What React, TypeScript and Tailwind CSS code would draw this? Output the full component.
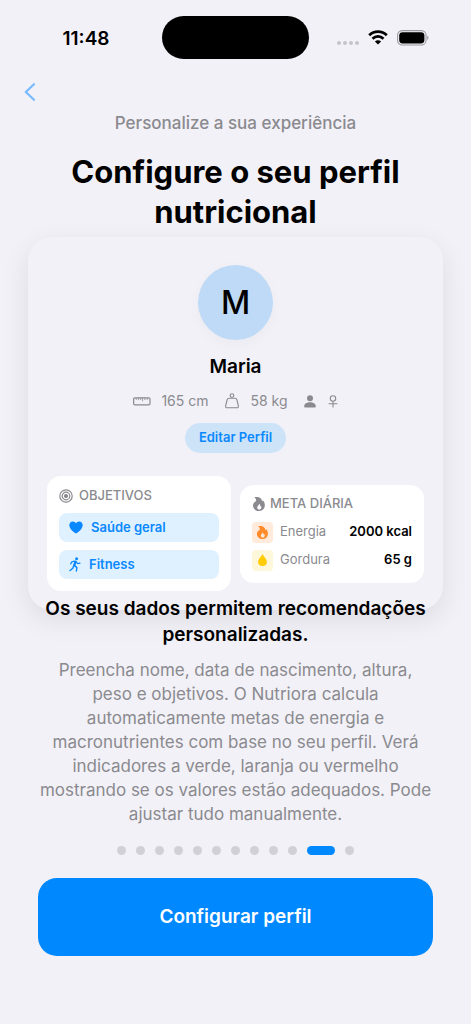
import React from "react";

const steps = 12;
const currentStep = 10;

const BatteryIcon = () => (
  <svg width="32" height="16" viewBox="0 0 32 16" fill="none">
    <rect x="0.6" y="0.6" width="28.4" height="14.4" rx="4.6" stroke="#9b9a9f" strokeWidth="1.1" />
    <rect x="2.2" y="2.2" width="25.2" height="11.2" rx="3.4" fill="#000" />
    <path d="M30.2 5.6c1.8.7 1.8 3.8 0 4.5z" fill="#9b9a9f" />
  </svg>
);

const WifiIcon = () => (
  <svg width="20" height="15" viewBox="0 0 20 15" fill="none" stroke="#000" strokeWidth="2.7">
    <path d="M1.2 5.2C6.2.3 13.8.3 18.8 5.2" />
    <path d="M4.5 8.7c3.2-3 7.8-3 11 0" />
    <path d="M10 14.6l-3.1-3.1c1.8-1.6 4.4-1.6 6.2 0z" fill="#000" stroke="none" />
  </svg>
);

const RulerIcon = () => (
  <svg width="18" height="9" viewBox="0 0 18 9" fill="none" stroke="#8a8a8f" strokeWidth="1.2">
    <rect x="0.6" y="0.8" width="16.4" height="7" rx="1.3" />
    <path d="M3.2 1v2M5.4 1v2M7.6 1v2M9.6 1v3.2M11.8 1v2M14.2 1v2" strokeWidth="0.8" />
  </svg>
);

const WeightIcon = () => (
  <svg width="14" height="16" viewBox="0 0 14 16" fill="none" stroke="#8a8a8f" strokeWidth="1.1">
    <circle cx="7" cy="2.5" r="1.8" />
    <path d="M4 5.2h6c1 0 1.5.4 1.8 1.3l1.5 6c.4 1.4-.2 2.3-1.4 2.3H2.1c-1.2 0-1.8-.9-1.4-2.3l1.5-6C2.5 5.6 3 5.2 4 5.2z" />
  </svg>
);

const PersonIcon = () => (
  <svg width="12" height="13" viewBox="0 0 12 13" fill="#8a8a8f">
    <circle cx="6" cy="3.2" r="3" />
    <path d="M.2 11.2C.2 8.8 2.7 7.2 6 7.2s5.8 1.6 5.8 4c0 1-.5 1.4-1.3 1.4h-9C.7 12.6.2 12.2.2 11.2z" />
  </svg>
);

const FemaleIcon = () => (
  <svg width="10" height="13" viewBox="0 0 10 13" fill="none" stroke="#8a8a8f" strokeWidth="1.1">
    <circle cx="5" cy="3.5" r="2.7" />
    <path d="M5 6.2V12.6M.6 8.8h8.8" />
  </svg>
);

const TargetIcon = () => (
  <svg width="14" height="14" viewBox="0 0 14 14" fill="none" stroke="#8a8a8f" strokeWidth="1.2">
    <circle cx="7" cy="7" r="6.2" />
    <circle cx="7" cy="7" r="3.8" />
    <circle cx="7" cy="7" r="1.5" fill="#8a8a8f" />
  </svg>
);

const FlameIcon = ({ size }: { size: number }) => (
  <svg width={size} height={size} viewBox="0 0 14 14" fill="currentColor" fillRule="evenodd">
    <path d="M2.3.3C6.4-.8 10 1.2 10.2 4.6c.4-.3.6-.8.6-1.3 1.4 1.3 2.1 3.2 2 5.2C12.6 11.8 10.2 14 7 14c-3.4 0-6-2.3-6-5.4 0-2.2 1.3-3.5 3.2-4.5C4.2 2.5 3.6 1.1 2.3.3zM7.2 6.6c.1 1.4-2 2.1-2 3.9 0 1.2.9 2 2 2 1.3 0 2.2-.9 2.2-2.1 0-.7-.2-1.2-.6-1.7-.1.3-.3.5-.6.6.1-1.1-.2-2.1-1-2.7z" />
  </svg>
);

const DropIcon = () => (
  <svg width="9" height="12" viewBox="0 0 9 12" fill="#ffcc00">
    <path d="M4.5 0C5 1.6 8.9 5 8.9 7.9 8.9 10.3 7 12 4.5 12S.1 10.3.1 7.9C.1 5 4 1.6 4.5 0z" />
  </svg>
);

const HeartIcon = () => (
  <svg width="14" height="13" viewBox="0 0 14 13" fill="currentColor">
    <path d="M7 12.6C6.5 12.5.3 8.6.3 4.3.3 2 1.8.5 3.8.5 5.2.5 6.3 1.2 7 2.4 7.7 1.2 8.8.5 10.2.5c2 0 3.5 1.5 3.5 3.8 0 4.3-6.2 8.2-6.7 8.3z" />
  </svg>
);

const RunnerIcon = () => (
  <svg
    width="12"
    height="15"
    viewBox="0 0 12 15"
    fill="none"
    stroke="currentColor"
    strokeLinecap="round"
    strokeLinejoin="round"
  >
    <circle cx="7.6" cy="1.7" r="1.5" fill="currentColor" stroke="none" />
    <path d="M6.5 4.8L5.2 8.3" strokeWidth="2.4" />
    <path d="M5.5 4.2L2.8 4.9 1.7 7M7.2 5l1.6 1.7 2.2-.5" strokeWidth="1.2" />
    <path d="M5.6 8.6l2.3 2-.5 3.4M4.6 8.9l-.8 2.3-2.8 2.3" strokeWidth="1.4" />
  </svg>
);

const goals = [
  { label: "Saúde geral", icon: <HeartIcon /> },
  { label: "Fitness", icon: <RunnerIcon /> },
];

const targets = [
  {
    label: "Energia",
    value: "2000 kcal",
    icon: <FlameIcon size={13} />,
    color: "bg-[#ffeadb] text-[#ff8a28]",
  },
  {
    label: "Gordura",
    value: "65 g",
    icon: <DropIcon />,
    color: "bg-[#fff7d9]",
  },
];

const StatusBar = () => (
  <div className="grid grid-cols-[1fr_147px_1fr] items-center pt-4">
    <span className="pt-1 pl-[10px] text-center text-[19px] font-semibold">11:48</span>
    <div className="h-[43px] rounded-full bg-black" />
    <div className="flex items-center gap-[9px] pl-7">
      <div className="flex gap-[2px] pt-[10px]">
        {[0, 1, 2, 3].map((dot) => (
          <span key={dot} className="size-1 rounded-full bg-[#c5c4c9]" />
        ))}
      </div>
      <WifiIcon />
      <BatteryIcon />
    </div>
  </div>
);

const ProfileCard = () => (
  <section className="mx-7 rounded-[24px] bg-[#f2f1f7] px-[19px] pt-7 pb-[19px] shadow-[0_9px_28px_rgba(0,0,0,0.09)]">
    <div className="flex flex-col items-center">
      <div className="flex size-[75px] items-center justify-center rounded-full bg-[#bedaf6] text-[32px] font-medium shadow-[0_4px_14px_rgba(0,0,0,0.03)]">
        M
      </div>
      <h2 className="mt-[13px] text-[19px] leading-7 font-semibold">Maria</h2>

      <div className="mt-[10px] flex h-5 items-center text-sm text-[#8a8a8f]">
        <RulerIcon />
        <span className="ml-[10px]">165 cm</span>
        <span className="ml-4">
          <WeightIcon />
        </span>
        <span className="ml-3">58 kg</span>
        <span className="ml-4">
          <PersonIcon />
        </span>
        <span className="ml-3">
          <FemaleIcon />
        </span>
      </div>

      <button className="mt-3 h-[30px] rounded-full bg-[#cde3f8] px-[14px] text-[13px] font-semibold text-[#0a88ff]">
        Editar Perfil
      </button>
    </div>

    <div className="mt-[23px] grid grid-cols-2 items-center gap-[9px]">
      <div className="rounded-[14px] bg-white px-3 pt-[10px] pb-3">
        <h3 className="flex h-[19px] items-center gap-[6px] text-[13px] font-medium text-[#8a8a8f]">
          <TargetIcon />
          OBJETIVOS
        </h3>
        <ul className="mt-2 flex flex-col gap-2">
          {goals.map((goal) => (
            <li
              key={goal.label}
              className="flex h-[29px] items-center gap-2 rounded-lg bg-[#dff1ff] px-[10px] text-[13px] font-semibold text-[#0a88ff]"
            >
              {goal.icon}
              {goal.label}
            </li>
          ))}
        </ul>
      </div>

      <div className="rounded-[14px] bg-white px-3 pt-[10px] pb-3">
        <h3 className="flex h-[19px] items-center gap-1 text-[13px] font-medium text-[#8a8a8f]">
          <FlameIcon size={14} />
          META DIÁRIA
        </h3>
        <dl className="mt-2 flex flex-col gap-[7px]">
          {targets.map((target) => (
            <div key={target.label} className="flex items-center text-[13px]">
              <span className={`flex size-[21px] items-center justify-center rounded ${target.color}`}>
                {target.icon}
              </span>
              <dt className="ml-[7px] text-[#8a8a8f]">{target.label}</dt>
              <dd className="ml-auto font-semibold">{target.value}</dd>
            </div>
          ))}
        </dl>
      </div>
    </div>
  </section>
);

const App = () => {
  return (
    <main className="min-h-screen bg-[#f2f1f7] font-['Inter',sans-serif] text-black">
      <StatusBar />

      {/* Header */}
      <header className="pt-5">
        <button aria-label="Voltar" className="flex h-[26px] items-center pl-6">
          <svg width="12" height="18" viewBox="0 0 12 18" fill="none">
            <path
              d="M10 1.2L1.8 9l8.2 7.8"
              stroke="#76bbff"
              strokeWidth="2.2"
              strokeLinecap="round"
              strokeLinejoin="round"
            />
          </svg>
        </button>
        <p className="mt-[6px] text-center text-[17px] leading-6 font-medium text-[#8a8a8f]">
          Personalize a sua experiência
        </p>
        <h1 className="mt-[17px] px-8 pb-[5px] text-center text-[31px] leading-10 font-bold">
          Configure o seu perfil nutricional
        </h1>
      </header>

      <ProfileCard />

      <div className="relative -mt-[14px] px-[38px] text-center">
        <h2 className="text-[19px] leading-[26px] font-semibold">
          Os seus dados permitem recomendações personalizadas.
        </h2>
        <p className="mt-[10px] text-[17px] leading-6 text-[#8a8a8f]">
          Preencha nome, data de nascimento, altura, peso e objetivos. O Nutriora calcula
          automaticamente metas de energia e macronutrientes com base no seu perfil. Verá
          indicadores a verde, laranja ou vermelho mostrando se os valores estão adequados. Pode
          ajustar tudo manualmente.
        </p>
      </div>

      {/* Step indicator */}
      <div className="mt-5 flex justify-center gap-[10px]">
        {Array.from({ length: steps }, (_, i) => (
          <span
            key={i}
            className={
              i === currentStep
                ? "h-[9px] w-7 rounded-full bg-[#0088ff]"
                : "size-[9px] rounded-full bg-[#d1d0d6]"
            }
          />
        ))}
      </div>

      <div className="px-[38px] pt-[23px] pb-8">
        <button className="h-[78px] w-full rounded-[19px] bg-[#0088ff] text-[19px] font-semibold text-white">
          Configurar perfil
        </button>
      </div>
    </main>
  );
};

export default App;
